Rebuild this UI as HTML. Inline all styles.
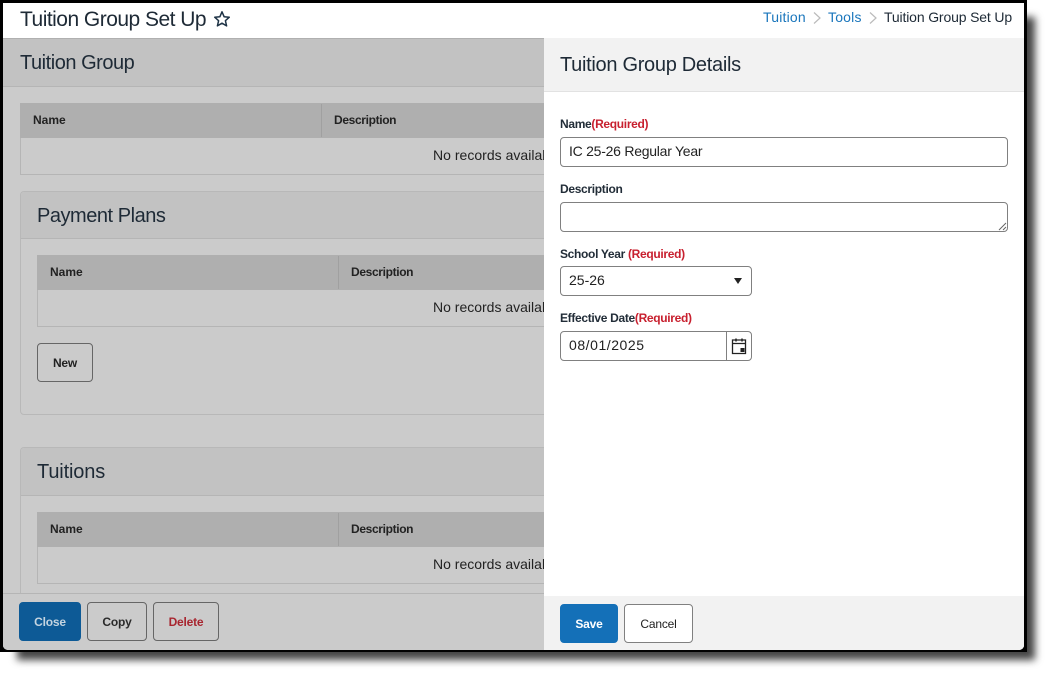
<!DOCTYPE html>
<html><head><meta charset="utf-8"><style>
html,body{margin:0;padding:0;width:1052px;height:678px;background:#fff;overflow:hidden}
body{font-family:"Liberation Sans",sans-serif;color:#1e2a36;position:relative}
.a{position:absolute;box-sizing:border-box}
.t{position:absolute;white-space:nowrap;line-height:1}
.th{font-size:12px;font-weight:bold;color:#222;letter-spacing:-.35px}
.h2{font-size:20px;color:#1e2a36;letter-spacing:-.47px}
.lab{font-size:12px;font-weight:bold;color:#222d38;letter-spacing:-.32px}
.req{color:#c8202f}
.btn{position:absolute;box-sizing:border-box;border:1px solid #666;border-radius:4px;font-size:12px;font-weight:bold;text-align:center;letter-spacing:-.2px}
.inp{position:absolute;box-sizing:border-box;background:#fff;border:1px solid #808080;border-radius:4px;font-size:14px;color:#222;padding-left:8px;white-space:nowrap}
</style></head><body>
<div class="a" style="left:17px;top:17px;width:1018px;height:643px;background:#444;filter:blur(4px)"></div>
<div class="a" style="left:0;top:0;width:1027px;height:652px;background:#000"></div>
<div class="a" style="left:3px;top:3px;width:1021px;height:647px;background:#fff;overflow:hidden;border-radius:0 0 5px 5px">
<div class="a" style="left:-3px;top:-3px;width:1027px;height:653px">
<div class="a" style="left:3px;top:38px;width:541px;height:611px;background:#cbcbcb"></div>
<div class="a" style="left:3px;top:38px;width:541px;height:1px;background:#b0b0b0"></div>
<div class="a" style="left:3px;top:39px;width:541px;height:48px;background:#c2c2c2;border-bottom:1px solid #b5b5b5"></div>
<div class="t" style="left:20px;top:9px;font-size:21px;letter-spacing:-.52px">Tuition Group Set Up</div>
<svg class="a" style="left:213px;top:10px" width="18" height="18" viewBox="0 0 18 18"><path d="M9 1.800l2.100 4.900 5.200.5-3.900 3.500 1.200 5.200L9 13.200l-4.600 2.700 1.200-5.200L1.700 7.200l5.200-.5z" fill="none" stroke="#1e3346" stroke-width="1.500" stroke-linejoin="round"/></svg>
<div class="t" style="left:763px;top:10px;font-size:14px;color:#1a76bc;letter-spacing:.2px">Tuition</div>
<svg class="a" style="left:812px;top:11px" width="10" height="14"><path d="M2 1.500l6 5.500-6 5.500" fill="none" stroke="#bbb" stroke-width="1.200"/></svg>
<div class="t" style="left:828px;top:10px;font-size:14px;color:#1a76bc;letter-spacing:.2px">Tools</div>
<svg class="a" style="left:868px;top:11px" width="10" height="14"><path d="M2 1.500l6 5.500-6 5.500" fill="none" stroke="#bbb" stroke-width="1.200"/></svg>
<div class="t" style="left:884px;top:10px;font-size:14px;color:#1e2a36;letter-spacing:-.15px">Tuition Group Set Up</div>
<div class="t h2" style="left:20px;top:53px">Tuition Group</div>
<div class="a" style="left:20px;top:103px;width:540px;height:72px;border:1px solid #b5b5b5;border-right:0"></div>
<div class="a" style="left:20px;top:103px;width:524px;height:35px;background:#afafaf"></div>
<div class="a" style="left:321px;top:104px;width:1px;height:33px;background:#a0a0a0"></div>
<div class="t th" style="left:33px;top:114px;letter-spacing:0">Name</div>
<div class="t th" style="left:334px;top:114px">Description</div>
<div class="t" style="left:433px;top:148px;font-size:14px;color:#222;letter-spacing:.02px">No records available</div>
<div class="a" style="left:20px;top:191px;width:540px;height:224px;border:1px solid #b8b8b8;border-radius:4px"></div>
<div class="a" style="left:21px;top:192px;width:523px;height:47px;background:#c2c2c2;border-bottom:1px solid #b5b5b5;border-top-left-radius:4px"></div>
<div class="t h2" style="left:37px;top:206px">Payment Plans</div>
<div class="a" style="left:37px;top:255px;width:520px;height:72px;border:1px solid #b5b5b5;border-right:0"></div>
<div class="a" style="left:37px;top:255px;width:507px;height:35px;background:#afafaf"></div>
<div class="a" style="left:338px;top:256px;width:1px;height:33px;background:#a0a0a0"></div>
<div class="t th" style="left:50px;top:266px;letter-spacing:0">Name</div>
<div class="t th" style="left:351px;top:266px">Description</div>
<div class="t" style="left:433px;top:300px;font-size:14px;color:#222">No records available</div>
<div class="btn" style="left:37px;top:343px;width:56px;height:39px;line-height:39px;color:#222">New</div>
<div class="a" style="left:20px;top:447px;width:540px;height:160px;border:1px solid #b8b8b8;border-radius:4px"></div>
<div class="a" style="left:21px;top:448px;width:523px;height:48px;background:#c2c2c2;border-bottom:1px solid #b5b5b5;border-top-left-radius:4px"></div>
<div class="t h2" style="left:37px;top:462px;letter-spacing:-.15px">Tuitions</div>
<div class="a" style="left:37px;top:512px;width:520px;height:72px;border:1px solid #b5b5b5;border-right:0"></div>
<div class="a" style="left:37px;top:512px;width:507px;height:35px;background:#afafaf"></div>
<div class="a" style="left:338px;top:513px;width:1px;height:33px;background:#a0a0a0"></div>
<div class="t th" style="left:50px;top:523px;letter-spacing:0">Name</div>
<div class="t th" style="left:351px;top:523px">Description</div>
<div class="t" style="left:433px;top:557px;font-size:14px;color:#222">No records available</div>
<div class="a" style="left:3px;top:593px;width:541px;height:57px;background:#cbcbcb;border-top:1px solid #b5b5b5"></div>
<div class="btn" style="left:19px;top:602px;width:62px;height:39px;line-height:39px;background:#0d5a96;border-color:#0d5a96;color:#c4d4e0">Close</div>
<div class="btn" style="left:87px;top:602px;width:60px;height:39px;line-height:39px;color:#2a2a2a">Copy</div>
<div class="btn" style="left:153px;top:602px;width:66px;height:39px;line-height:39px;color:#a82630">Delete</div>
<div class="a" style="left:544px;top:38px;width:480px;height:612px;background:#fff"></div>
<div class="a" style="left:544px;top:38px;width:480px;height:54px;background:#f2f2f2;border-bottom:1px solid #e2e2e2"></div>
<div class="t" style="left:560px;top:55px;font-size:20px;color:#1e2a36;letter-spacing:-.3px">Tuition Group Details</div>
<div class="t lab" style="left:560px;top:118px">Name<span class="req">(Required)</span></div>
<div class="inp" style="left:560px;top:137px;width:448px;height:30px;line-height:27px;letter-spacing:-.25px">IC 25-26 Regular Year</div>
<div class="t lab" style="left:560px;top:183px">Description</div>
<div class="inp" style="left:560px;top:202px;width:448px;height:30px"></div>
<svg class="a" style="left:998px;top:222px" width="9" height="9"><path d="M8 1L1 8M8 5L5 8" stroke="#666" stroke-width="1"/></svg>
<div class="t lab" style="left:560px;top:248px">School Year <span class="req">(Required)</span></div>
<div class="inp" style="left:560px;top:266px;width:192px;height:30px;line-height:27px">25-26</div>
<svg class="a" style="left:733px;top:277px" width="10" height="8"><path d="M1 1h8L5 7z" fill="#222"/></svg>
<div class="t lab" style="left:560px;top:312px">Effective Date<span class="req">(Required)</span></div>
<div class="inp" style="left:560px;top:331px;width:192px;height:30px;line-height:27px;letter-spacing:.55px">08/01/2025</div>
<div class="a" style="left:726px;top:332px;width:1px;height:28px;background:#808080"></div>
<svg class="a" style="left:731px;top:337px" width="16" height="18" viewBox="0 0 16 18"><path d="M1.500 3h13v13.500h-13zM1.500 6.500h13" fill="none" stroke="#222" stroke-width="1.300"/><path d="M5 1.500v3M11 1.500v3" stroke="#222" stroke-width="1.500"/><rect x="9.500" y="11" width="4" height="4" fill="#222"/></svg>
<div class="a" style="left:544px;top:596px;width:480px;height:54px;background:#f2f2f2"></div>
<div class="btn" style="left:560px;top:604px;width:58px;height:39px;line-height:39px;background:#1470b8;border-color:#1470b8;color:#fff">Save</div>
<div class="btn" style="left:624px;top:604px;width:69px;height:39px;line-height:39px;background:#fff;border-color:#808080;color:#222;font-weight:normal">Cancel</div>
</div></div>
</body></html>
